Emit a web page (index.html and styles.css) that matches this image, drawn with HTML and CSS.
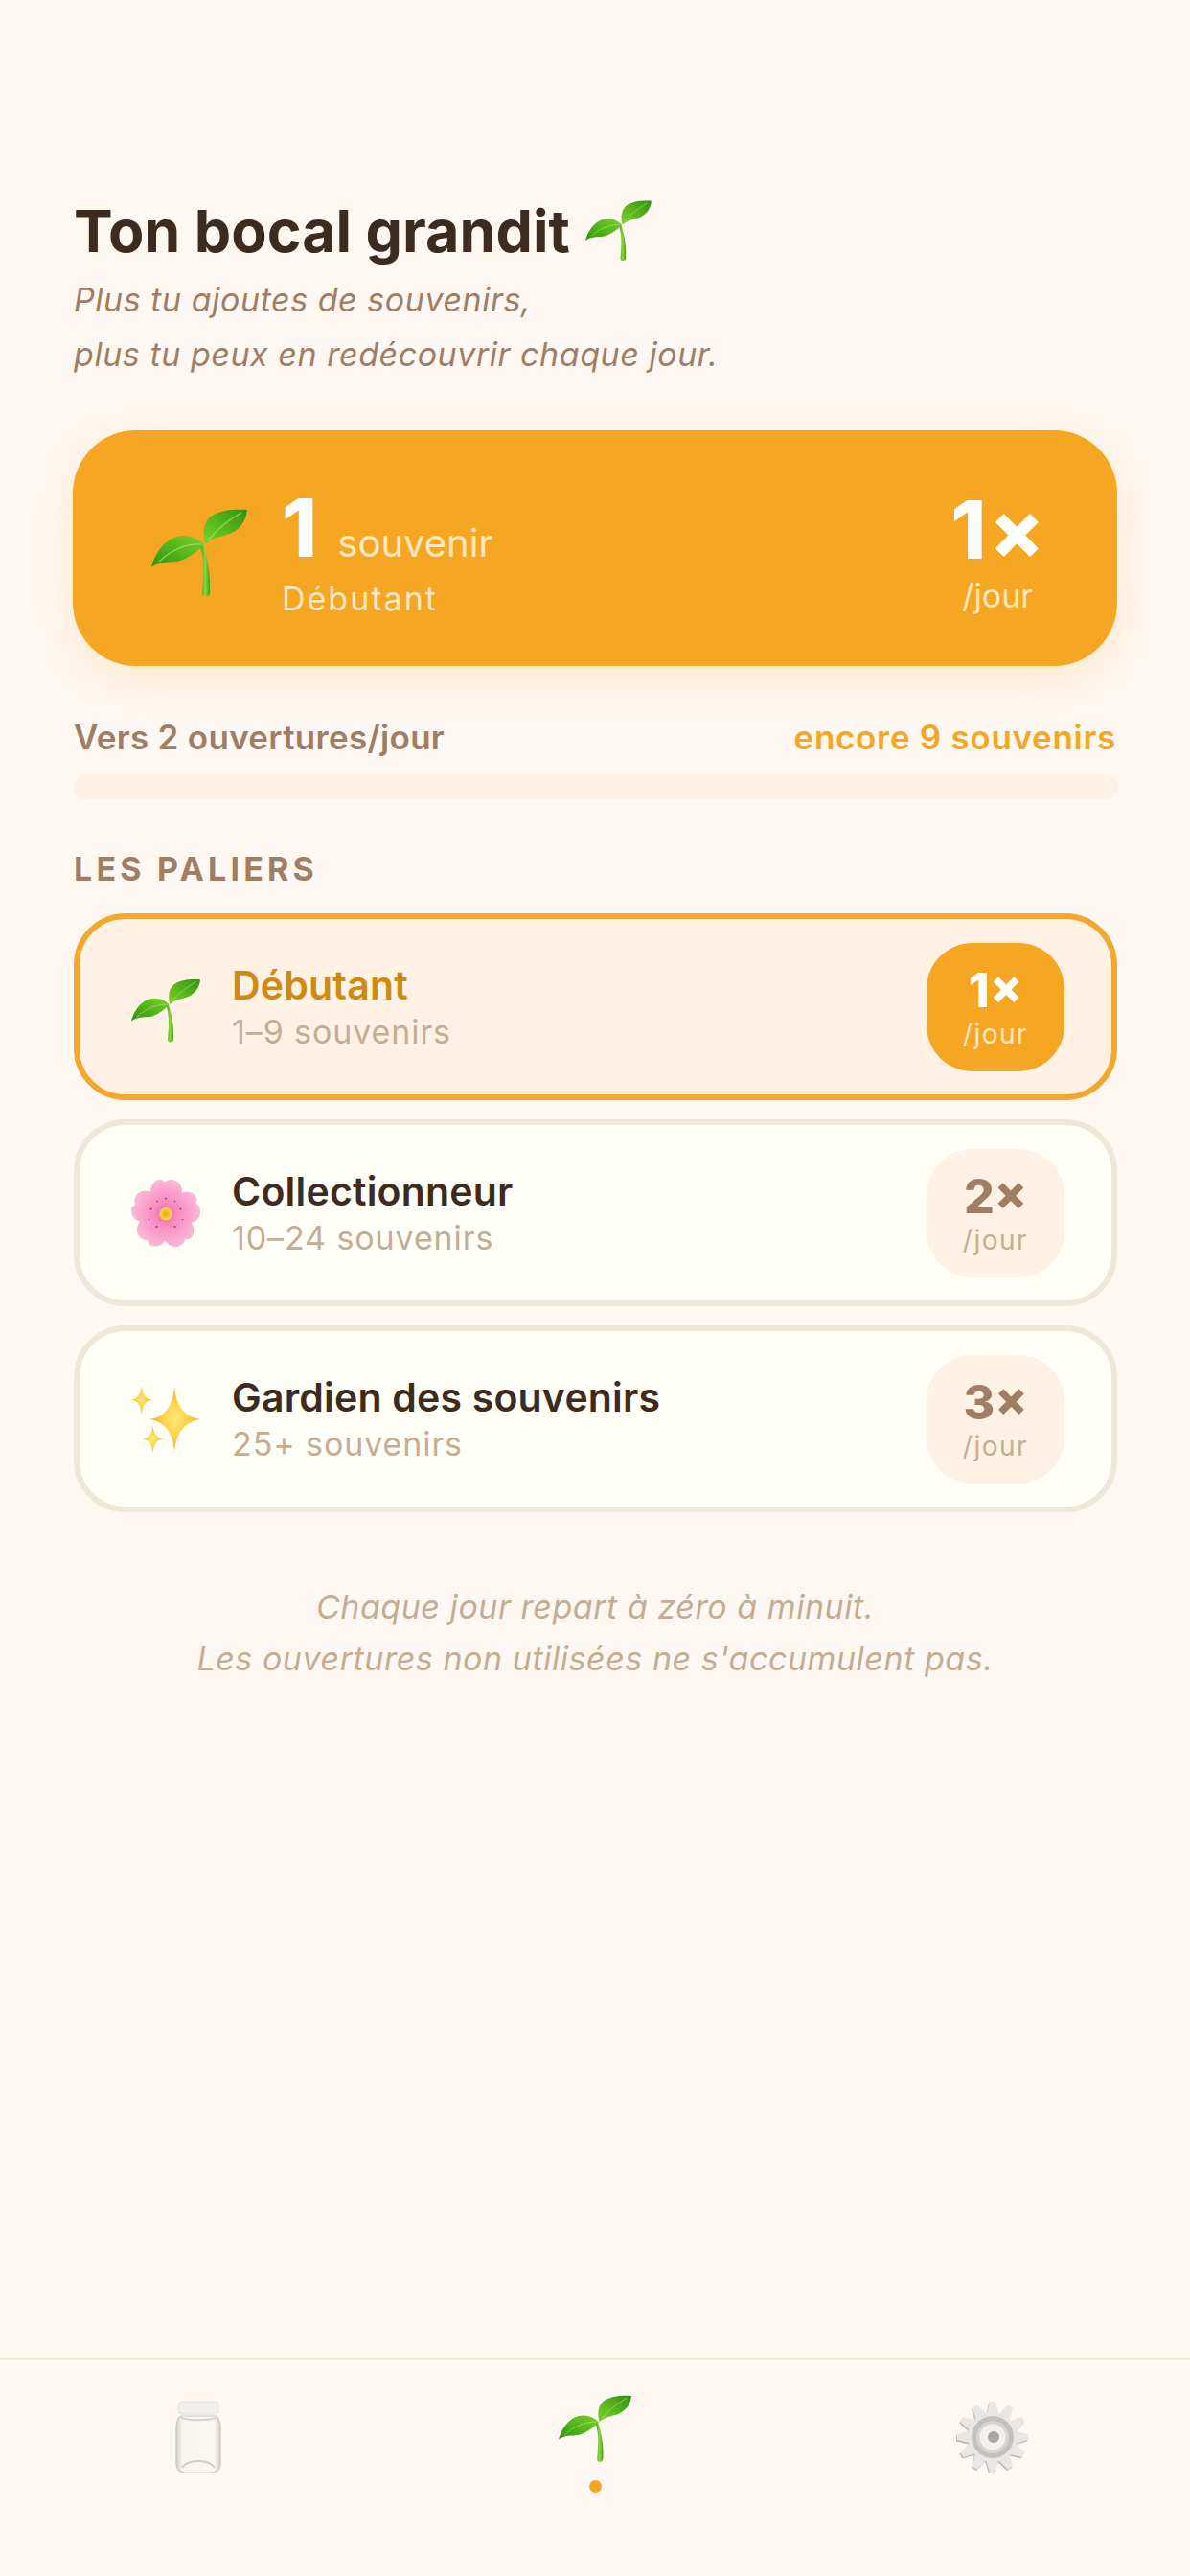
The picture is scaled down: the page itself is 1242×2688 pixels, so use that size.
FILE: index.html
```html
<!DOCTYPE html>
<html lang="fr">
<head>
    <meta charset="UTF-8">
    <meta name="viewport" content="width=device-width, initial-scale=1.0">
    <title>Ton bocal grandit</title>
    <link rel="stylesheet" href="styles.css">
</head>
<body>
    <!-- Dessins réutilisés partout -->
    <svg class="sprite" aria-hidden="true">
        <defs>
            <linearGradient id="leafA" x1="0" y1="1" x2="1" y2="0">
                <stop offset="0" stop-color="#2f8f10"/>
                <stop offset=".55" stop-color="#58b81c"/>
                <stop offset="1" stop-color="#7ccf2c"/>
            </linearGradient>
            <linearGradient id="leafB" x1="0" y1="1" x2="1" y2="0">
                <stop offset="0" stop-color="#7fd02f"/>
                <stop offset=".5" stop-color="#55b51b"/>
                <stop offset="1" stop-color="#338f12"/>
            </linearGradient>
            <linearGradient id="stem" x1="0" y1="0" x2="1" y2="0">
                <stop offset="0" stop-color="#3f9c16"/>
                <stop offset=".5" stop-color="#8ed63a"/>
                <stop offset="1" stop-color="#3f9c16"/>
            </linearGradient>
            <radialGradient id="petal" cx=".5" cy="1" r="1">
                <stop offset="0" stop-color="#ec5fa5"/>
                <stop offset=".35" stop-color="#f78cc0"/>
                <stop offset="1" stop-color="#fcb8d8"/>
            </radialGradient>
            <radialGradient id="heart" cx=".5" cy=".5" r=".5">
                <stop offset="0" stop-color="#f5a01e"/>
                <stop offset="1" stop-color="#f8dc4a"/>
            </radialGradient>
            <radialGradient id="star" cx=".5" cy=".5" r=".5">
                <stop offset="0" stop-color="#ffe874"/>
                <stop offset=".55" stop-color="#fdd04a"/>
                <stop offset="1" stop-color="#f8a52a"/>
            </radialGradient>
            <linearGradient id="glass" x1="0" y1="0" x2="1" y2="0">
                <stop offset="0" stop-color="#d2cfcb"/>
                <stop offset=".14" stop-color="#f8f4f0"/>
                <stop offset=".86" stop-color="#faf6f2"/>
                <stop offset="1" stop-color="#d4d1cd"/>
            </linearGradient>
            <symbol id="sprout" viewBox="0 0 100 93">
                <path d="M54 37C59 52 62 70 61 88c-1 5-8 5-8 0 1-16 3-32-2-49z" fill="url(#stem)"/>
                <path d="M0 61C4 45 16 28 34 28c9 0 16 4 21 9-7 8-17 15-28 18-10 1-19 0-27 6z" fill="url(#leafA)"/>
                <path d="M56 37c-3-12-2-22 6-29 10-7 24-8 38-7-1 11-7 20-18 25-9 3-19 4-26 11z" fill="url(#leafB)"/>
                <path d="M8 55C20 44 36 36 52 37M59 33C68 22 78 13 94 4" fill="none" stroke="#a5e264" stroke-width="1.2" opacity=".8"/>
            </symbol>
            <symbol id="flower" viewBox="4 2 92 98">
                <path id="p1" d="M50 52C36 42 25 30 29 15 31 6 42 1 45 4c2 2 3 3 5 2 3-3 8-3 12-2 10 3 13 13 10 23-3 10-13 19-22 25z" fill="url(#petal)"/>
                <use href="#p1" transform="rotate(72 50 52)"/>
                <use href="#p1" transform="rotate(144 50 52)"/>
                <use href="#p1" transform="rotate(216 50 52)"/>
                <use href="#p1" transform="rotate(288 50 52)"/>
                <circle cx="50" cy="52" r="9" fill="url(#heart)"/>
                <g fill="#6b3a4a">
                    <circle cx="50" cy="30" r="1.2"/><circle cx="71" cy="45" r="1.2"/><circle cx="63" cy="70" r="1.2"/>
                    <circle cx="37" cy="70" r="1.2"/><circle cx="29" cy="45" r="1.2"/><circle cx="38" cy="34" r="1"/>
                    <circle cx="63" cy="34" r="1"/><circle cx="74" cy="60" r="1"/><circle cx="26" cy="60" r="1"/>
                </g>
            </symbol>
            <symbol id="sparkles" viewBox="0 0 67 66">
                <path d="M42 2Q44.5 29.5 67 33 44.5 36.5 42 64 39.5 36.5 18 33 39.5 29.5 42 2z" fill="url(#star)"/>
                <path d="M10 0Q11 13 20 14 11 15 10 29 9 15 0 14 9 13 10 0z" fill="url(#star)"/>
                <path d="M21 39Q22 51 31 52 22 53 21 66 20 53 11 52 20 51 21 39z" fill="url(#star)"/>
            </symbol>
            <g id="gearShape">
                <path id="tooth" d="M32 15C33 9 34 5 35 1h6c1 5 3 9 4 14z"/>
                <use href="#tooth" transform="rotate(30 38 38)"/>
                <use href="#tooth" transform="rotate(60 38 38)"/>
                <use href="#tooth" transform="rotate(90 38 38)"/>
                <use href="#tooth" transform="rotate(120 38 38)"/>
                <use href="#tooth" transform="rotate(150 38 38)"/>
                <use href="#tooth" transform="rotate(180 38 38)"/>
                <use href="#tooth" transform="rotate(210 38 38)"/>
                <use href="#tooth" transform="rotate(240 38 38)"/>
                <use href="#tooth" transform="rotate(270 38 38)"/>
                <use href="#tooth" transform="rotate(300 38 38)"/>
                <use href="#tooth" transform="rotate(330 38 38)"/>
                <circle cx="38" cy="38" r="26"/>
            </g>
        </defs>
    </svg>

    <div class="page">
        <main class="content">
            <h1 class="title">Ton bocal grandit <svg class="title-icon"><use href="#sprout"/></svg></h1>
            <p class="subtitle">Plus tu ajoutes de souvenirs,<br>plus tu peux en redécouvrir chaque jour.</p>

            <section class="hero">
                <svg class="hero-icon"><use href="#sprout"/></svg>
                <div class="hero-text">
                    <div class="hero-count"><b>1</b> <span>souvenir</span></div>
                    <div class="hero-level">Débutant</div>
                </div>
                <div class="hero-rate">
                    <b>1×</b>
                    <span>/jour</span>
                </div>
            </section>

            <div class="progress-row">
                <span class="progress-label">Vers 2 ouvertures/jour</span>
                <span class="progress-left">encore 9 souvenirs</span>
            </div>
            <div class="progress-bar"></div>

            <h2 class="section-title">LES PALIERS</h2>

            <div class="tiers">
                <div class="tier active">
                    <svg class="tier-icon tier-sprout"><use href="#sprout"/></svg>
                    <div class="tier-text">
                        <div class="tier-name">Débutant</div>
                        <div class="tier-range">1–9 souvenirs</div>
                    </div>
                    <div class="badge"><b>1×</b><span>/jour</span></div>
                </div>
                <div class="tier">
                    <svg class="tier-icon"><use href="#flower"/></svg>
                    <div class="tier-text">
                        <div class="tier-name">Collectionneur</div>
                        <div class="tier-range">10–24 souvenirs</div>
                    </div>
                    <div class="badge"><b>2×</b><span>/jour</span></div>
                </div>
                <div class="tier">
                    <svg class="tier-icon"><use href="#sparkles"/></svg>
                    <div class="tier-text">
                        <div class="tier-name">Gardien des souvenirs</div>
                        <div class="tier-range">25+ souvenirs</div>
                    </div>
                    <div class="badge"><b>3×</b><span>/jour</span></div>
                </div>
            </div>

            <p class="note">Chaque jour repart à zéro à minuit.<br>Les ouvertures non utilisées ne s'accumulent pas.</p>
        </main>

        <nav class="tabbar">
            <div class="tab">
                <svg class="tab-jar" viewBox="0 0 48 76">
                    <path d="M6 16C2 19 1 23 1 28v38c0 6 4 9 10 9h26c6 0 10-3 10-9V28c0-5-1-9-5-12z" fill="url(#glass)" stroke="#c9c6c2" stroke-width="1.2"/>
                    <path d="M7 70c3-5 9-7 17-7s14 2 17 7" fill="none" stroke="#d2cfcb" stroke-width="2"/>
                    <rect x="3" y="1" width="42" height="13" rx="4" fill="#f1f0ee" stroke="#e2e0dd" stroke-width="1"/>
                    <path d="M6 18c10 3 26 3 36 0" fill="none" stroke="#d6d3cf" stroke-width="2"/>
                </svg>
            </div>
            <div class="tab">
                <svg class="tab-sprout"><use href="#sprout"/></svg>
                <i class="tab-dot"></i>
            </div>
            <div class="tab">
                <svg class="tab-gear" viewBox="0 0 76 76">
                    <use href="#gearShape" fill="#bdbbb8" transform="translate(-1 1.5)"/>
                    <use href="#gearShape" fill="#e8e7e5"/>
                    <circle cx="38" cy="38" r="22" fill="#c3c1be"/>
                    <circle cx="38" cy="38" r="17" fill="#d6d5d2"/>
                    <circle cx="38" cy="38" r="13.5" fill="#f2f1ef"/>
                    <circle cx="39" cy="38" r="6" fill="#a9a7a4"/>
                </svg>
            </div>
        </nav>
    </div>
</body>
</html>
```

FILE: styles.css
```css
* {
    box-sizing: border-box;
}
body {
    margin: 0;
    background-color: #fff8f2;
    font-family: Inter, "Liberation Sans", sans-serif;
    color: #3d2b1f;
}
.sprite {
    display: block;
    width: 0;
    height: 0;
}
.page {
    display: flex;
    flex-direction: column;
    height: 2688px;
    overflow: hidden;
}
.content {
    flex: 1;
    padding: 198px 77px 0;
}

.title {
    display: flex;
    align-items: center;
    margin: 0;
    height: 86px;
    font-size: 61px;
    font-weight: 700;
    white-space: pre;
}
.title-icon {
    width: 69px;
    height: 64px;
    margin-left: 2px;
}
.subtitle {
    margin: 0;
    font-size: 34px;
    font-style: italic;
    line-height: 57px;
    letter-spacing: 0.55px;
    color: #a07e65;
}

.hero {
    display: flex;
    align-items: center;
    height: 246px;
    margin: 51px -1px 0 -1px;
    padding: 0 73px 0 82px;
    border-radius: 66px;
    background-color: #f5a623;
    box-shadow: 0 12px 48px rgba(245, 166, 35, 0.2);
    color: #fff;
}
.hero-icon {
    width: 100px;
    height: 93px;
    margin-top: 11px;
}
.hero-text {
    flex: 1;
    margin: 24px 0 0 36px;
}
.hero-count {
    font-size: 40px;
    line-height: 66px;
    color: #ffe8c0;
}
.hero-count b {
    font-size: 84px;
    font-weight: 800;
    color: #fff;
}
.hero-count span {
    margin-left: 10px;
}
.hero-level {
    font-size: 34px;
    letter-spacing: 2px;
    line-height: 50px;
    color: #ffe8c0;
}
.hero-rate {
    display: flex;
    flex-direction: column;
    align-items: center;
    margin-top: 8px;
}
.hero-rate b {
    font-size: 84px;
    font-weight: 800;
    letter-spacing: 3px;
    line-height: 92px;
}
.hero-rate span {
    margin-right: 3px;
    font-size: 34px;
    line-height: 46px;
    color: #ffe8c0;
}

.progress-row {
    display: flex;
    justify-content: space-between;
    margin-top: 50px;
    font-size: 35px;
    font-weight: 600;
    line-height: 48px;
}
.progress-label {
    letter-spacing: 0.3px;
    color: #a07e65;
}
.progress-left {
    letter-spacing: 0.7px;
    color: #f5a623;
}
.progress-bar {
    height: 26px;
    margin: 15px -1px 0 0;
    border-radius: 12px;
    background-color: #fff1e3;
}

.section-title {
    margin: 51px 0 0;
    font-size: 34px;
    font-weight: 700;
    letter-spacing: 4.2px;
    line-height: 44px;
    color: #a07e65;
}

.tiers {
    display: flex;
    flex-direction: column;
    gap: 20px;
    margin: 24px -1px 0 0;
}
.tier {
    display: flex;
    align-items: center;
    height: 195px;
    padding: 0 49px 0 54px;
    border: 6px solid #ede8d8;
    border-radius: 54px;
    background-color: #fffef7;
}
.tier.active {
    border-color: #f2a72e;
    background-color: #fff1e3;
}
.tier-icon {
    width: 72px;
    height: 72px;
}
.tier-sprout {
    margin-top: 8px;
}
.tier-text {
    flex: 1;
    margin: 3px 0 0 33px;
}
.tier-name {
    font-size: 41px;
    font-weight: 600;
    letter-spacing: 0.2px;
    line-height: 50px;
}
.active .tier-name {
    color: #d08a12;
}
.tier-range {
    font-size: 34px;
    letter-spacing: 0.9px;
    line-height: 48px;
    color: #c4ad93;
}
.badge {
    display: flex;
    flex-direction: column;
    align-items: center;
    justify-content: center;
    width: 144px;
    height: 134px;
    border-radius: 48px;
    background-color: #fff1e3;
    color: #a07e65;
}
.badge b {
    font-size: 50px;
    font-weight: 800;
    line-height: 56px;
}
.badge span {
    font-size: 28px;
    letter-spacing: 1.5px;
    line-height: 36px;
    color: #c4ad93;
}
.active .badge {
    background-color: #f5a623;
    color: #fff;
}
.active .badge span {
    color: #ffe8c0;
}

.note {
    margin: 72px 0 0;
    text-align: center;
    font-size: 34px;
    font-style: italic;
    line-height: 54px;
    letter-spacing: 0.55px;
    color: #c4ad93;
}

.tabbar {
    display: flex;
    justify-content: space-around;
    height: 228px;
    border-top: 3px solid #f0ebdc;
}
.tab {
    display: flex;
    flex: 1;
    flex-direction: column;
    align-items: center;
    padding-top: 36px;
}
.tab-jar {
    width: 48px;
    height: 76px;
    margin-top: 6px;
}
.tab-sprout {
    width: 76px;
    height: 71px;
}
.tab-dot {
    width: 13px;
    height: 13px;
    margin-top: 18px;
    border-radius: 50%;
    background-color: #f5a623;
}
.tab-gear {
    width: 76px;
    height: 76px;
    margin: 6px 0 0 2px;
}
```
